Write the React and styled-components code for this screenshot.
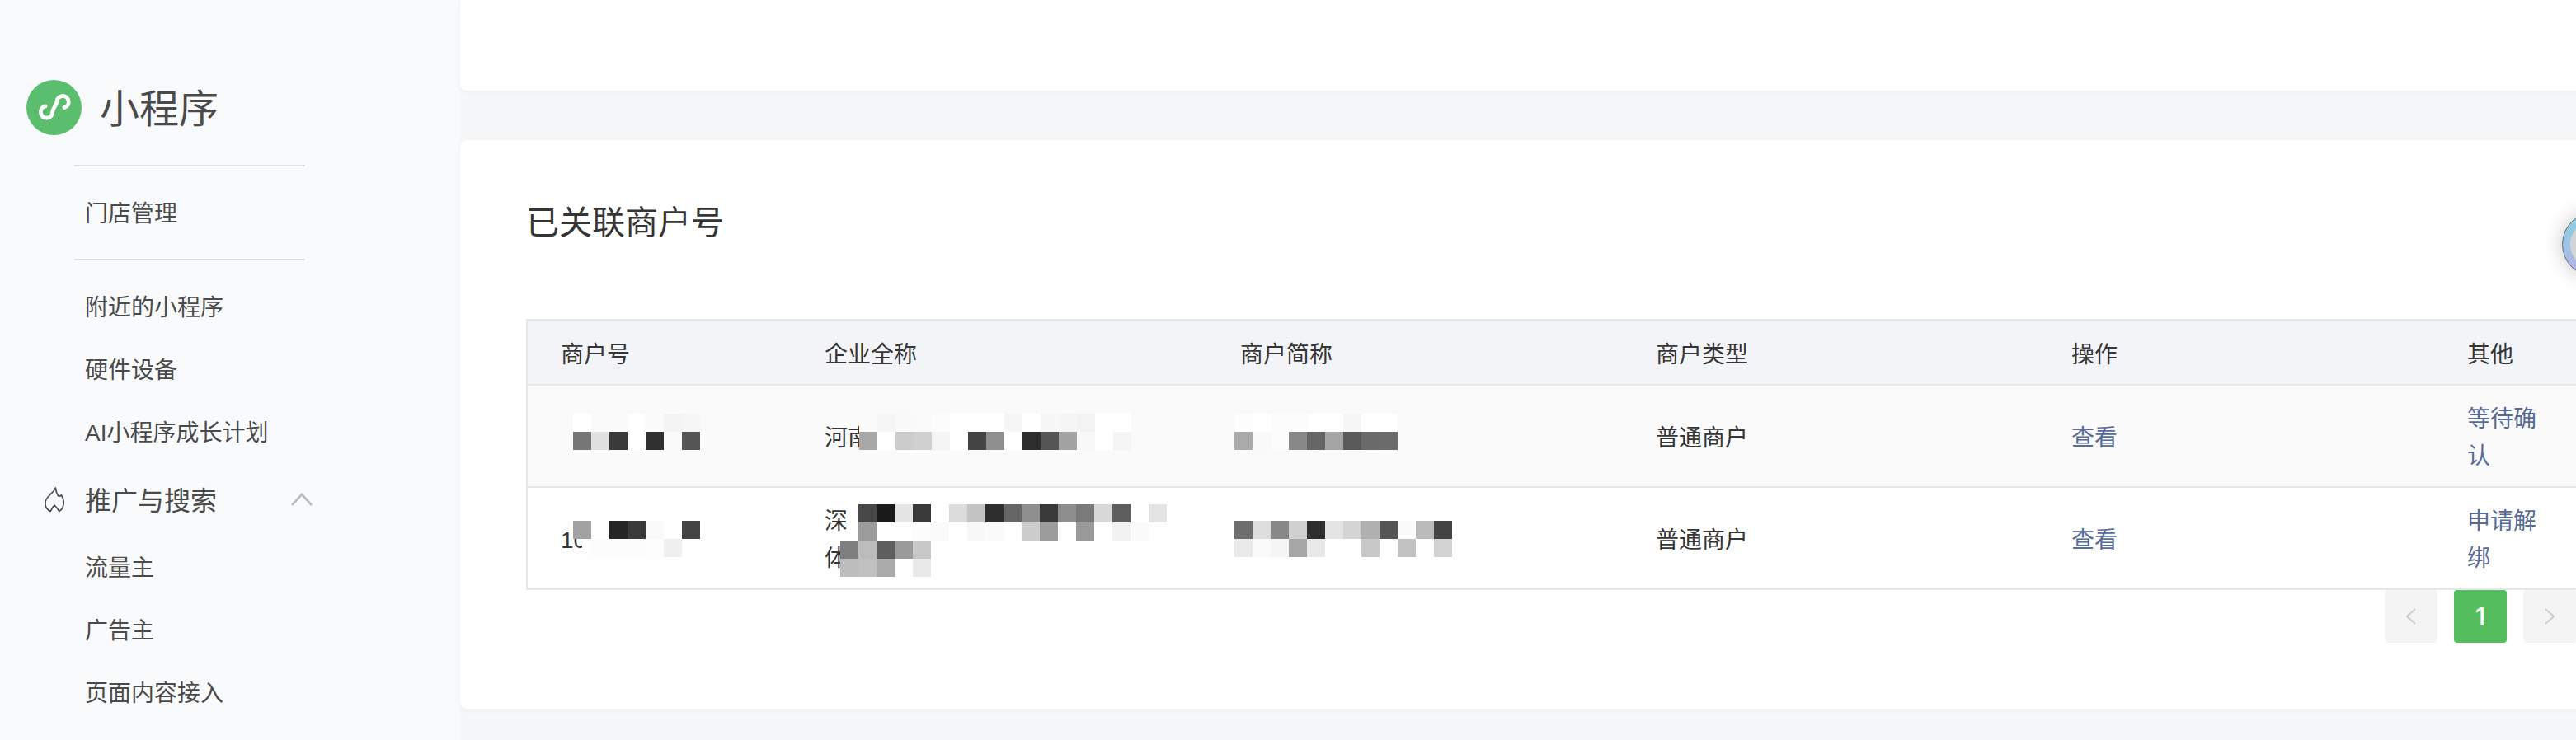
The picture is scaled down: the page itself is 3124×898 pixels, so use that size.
import React from 'react';
import styled, { createGlobalStyle } from 'styled-components';

const GlobalStyle = createGlobalStyle`
  html, body {
    margin: 0;
    padding: 0;
    width: 3124px;
    height: 898px;
    overflow: hidden;
    background: #f6f7f9;
  }
  * {
    box-sizing: border-box;
  }
`;

const Page = styled.div`
  position: relative;
  display: flex;
  width: 3124px;
  height: 898px;
  overflow: hidden;
  background: #f6f7f9;
  color: #353535;
  font-family: "Liberation Sans", "Noto Sans CJK SC", sans-serif;
  font-size: 28px;
`;

const Sidebar = styled.aside`
  flex: none;
  width: 558px;
  height: 100%;
  padding-top: 97px;
  background: #f9fafc;
  color: #4a4a4a;
`;

const Brand = styled.div`
  display: flex;
  align-items: center;
  gap: 22px;
  height: 67px;
  margin: 0 0 36px 32px;
  font-size: 48px;
`;

const BrandName = styled.span`
  padding-bottom: 5px;
`;

const Divider = styled.div`
  width: 280px;
  height: 2px;
  margin: 18px 0 18px 90px;
  background: #dfe0e3;
`;

const NavItem = styled.div`
  height: 76px;
  padding: 2px 0 0 103px;
  line-height: 76px;
`;

const NavGroup = styled.div`
  display: flex;
  align-items: center;
  height: 88px;
  padding-left: 54px;
  font-size: 32px;
`;

const GroupLabel = styled.span`
  width: 250px;
  margin-left: 25px;
  padding-bottom: 3px;
`;

const Main = styled.main`
  flex: none;
  width: 2640px;
`;

const TopCard = styled.div`
  height: 110px;
  margin-bottom: 60px;
  border-radius: 0 0 8px 8px;
  background: #fff;
  box-shadow: 0 2px 8px rgba(0, 0, 0, 0.04);
`;

const Card = styled.section`
  height: 690px;
  padding: 72px 0 0 80px;
  border-radius: 8px;
  background: #fff;
  box-shadow: 0 2px 8px rgba(0, 0, 0, 0.04);
`;

const Title = styled.h2`
  height: 60px;
  margin: -2px 0 87px 0;
  color: #353535;
  font-size: 40px;
  font-weight: 400;
  line-height: 60px;
`;

const Table = styled.table`
  width: 2495px;
  border: 2px solid #e6e7ec;
  border-collapse: collapse;
  table-layout: fixed;
`;

const Th = styled.th`
  width: ${props => props.$width}px;
  height: 79px;
  padding: 0 40px;
  border-bottom: 2px solid #e6e7ec;
  background: #f3f4f8;
  color: #353535;
  font-weight: 400;
  text-align: left;
`;

const Row = styled.tr`
  background: ${props => (props.$shaded ? '#fafafb' : '#fefefe')};
  border-bottom: 2px solid #e6e7ec;
`;

const Td = styled.td`
  position: relative;
  height: 122px;
  padding: 18px 40px 14px;
  color: ${props => (props.$link ? '#576b95' : '#353535')};
  line-height: 45px;
`;

const Mosaic = styled.div`
  position: absolute;
  left: ${props => props.$left}px;
  top: ${props => props.$top}px;
  display: flex;
  flex-direction: column;
`;

const MosaicRow = styled.div`
  display: flex;
  height: 22px;
`;

const MosaicCell = styled.span`
  flex: none;
  width: ${props => props.$width}px;
  background: ${props => props.$color};
`;

const Pagination = styled.nav`
  display: flex;
  justify-content: flex-end;
  gap: 20px;
  width: 2486px;
`;

const PageButton = styled.div`
  display: flex;
  align-items: center;
  justify-content: center;
  width: 64px;
  height: 64px;
  border-radius: 4px;
  background: ${props => (props.$active ? '#54bd5e' : '#f4f4f4')};
  color: #fff;
  font-family: "Inter", "Liberation Sans", sans-serif;
  font-size: 30px;
  font-weight: 500;
`;

const FloatBall = styled.div`
  position: absolute;
  left: 3107px;
  top: 257px;
  width: 79px;
  height: 79px;
  padding: 9px;
  border: 1px solid #666;
  border-radius: 50%;
  background: linear-gradient(180deg, #8ccde0 0%, #9cc4e4 50%, #bbb0ea 100%);
  box-shadow: 0 0 24px rgba(0, 0, 0, 0.22);
`;

const FloatInner = styled.div`
  width: 100%;
  height: 100%;
  border-radius: 50%;
  background: #d4d4d4;
`;

const Watermarks = styled.div`
  position: absolute;
  left: 23px;
  top: 39px;
  display: grid;
  grid-template-columns: repeat(8, 432px);
  grid-auto-rows: 92.4px;
  align-items: center;
  color: rgba(0, 0, 0, 0.022);
  font-family: "Liberation Sans", sans-serif;
  font-size: 28px;
  pointer-events: none;
`;

const LogoIcon = () => (
  <svg width="67" height="67" viewBox="0 0 67 67">
    <circle cx="33.5" cy="33.5" r="33.5" fill="#5abe6e" />
    <path
      d="M46 33.6A7.2 7.2 0 1 0 36.8 26.7C36.8 30 31.7 35 31.7 39A7.2 7.2 0 1 1 23 31.9"
      fill="none"
      stroke="#fff"
      strokeWidth="4.8"
      strokeLinecap="round"
    />
  </svg>
);

const FlameIcon = () => (
  <svg width="24" height="31" viewBox="0 0 24 31" fill="none" stroke="#4a4a4a" strokeWidth="1.7" strokeLinejoin="round">
    <path d="M13.3 1C13.5 4.5 15 8 16.7 11C18 11.3 19.5 10.8 20.3 9.8C22.3 12.5 23.2 15.5 23.2 18.7C23.2 23.5 21 27.5 17.8 29.5C16.5 27 14 24 12 22C10 24 8.5 27 7.3 29.5C3.5 28 0.9 24 0.9 19.5C0.9 15 4 11.8 7 9C9.5 6.8 12 4.5 13.3 1Z" />
  </svg>
);

const ChevronUp = () => (
  <svg width="26" height="16" viewBox="0 0 26 16" fill="none" stroke="#bcbcbc" strokeWidth="2.6">
    <path d="M1 15L13 2L25 15" />
  </svg>
);

const PageArrow = ({ flip }) => (
  <svg width="12" height="20" viewBox="0 0 12 20" fill="none" stroke="#cdcdcd" strokeWidth="2">
    <path d={flip ? 'M1 1L11 10L1 19' : 'M11 1L1 10L11 19'} />
  </svg>
);

// colours read off the pixelated patches; '.' lets the text below show through
const patches = {
  idShaded: [
    ['#fff', '#fbfbfb', '#fbfbfb', '#fff', '#fbfbfb', '#f4f4f4', '#f6f6f6'],
    ['#777', '#e0e0e0', '#3a3a3a', '#fff', '#303030', '#fafafa', '#555'],
  ],
  nameShaded: [
    ['#fbfbfb', '#f6f6f6', '#f9f9f9', '#fafafa', '#fcfcfc', '#fff', '#fff', '#fff', '#f6f6f6', '#fff', '#f7f7f7', '#f5f5f5', '#f3f3f3', '#fff', '#fff'],
    ['#a8a8a8', '#fff', '#ccc', '#d0d0d0', '#f5f5f5', '#fff', '#444', '#8f8f8f', '#fff', '#2e2e2e', '#555', '#a3a3a3', '#f8f8f8', '#fff', '#f5f5f5'],
  ],
  shortShaded: [
    ['#fdfdfd', '#fff', '#fcfcfc', '#fcfcfc', '#fff', '#fff', '#f6f6f6', '#fff', '#fff'],
    ['#aaa', '#f9f9f9', '#fcfcfc', '#888', '#666', '#a5a5a5', '#5a5a5a', '#6a6a6a', '#6c6c6c'],
  ],
  idPlain: [
    ['#a2a2a2', '#fff', '#252525', '#3a3a3a', '#fafafa', '#fff', '#444'],
    [['.', 11], ['#fefefe', 11], '#fcfcfc', '#fcfcfc', '#fcfcfc', '#fdfdfd', '#f0f0f0'],
  ],
  namePlain: [
    ['.', '#484848', '#1a1a1a', '#e5e5e5', '#3a3a3a', '#fff', '#dcdcdc', '#c4c4c4', '#2e2e2e', '#666', '#8f8f8f', '#3a3a3a', '#8e8e8e', '#7a7a7a', '#d8d8d8', '#5e5e5e', '#fff', '#e4e4e4'],
    ['.', '#9c9c9c', '#fff', '#fff', '#fcfcfc', '#fafafa', '#fff', '#f8f8f8', '#fbfbfb', '#fff', '#ccc', '#9c9c9c', '#fff', '#9a9a9a', '#fff', '#f2f2f2', '#fbfbfb'],
    ['#7f7f7f', '#bcbcbc', '#5e5e5e', '#9a9a9a', '#c8c8c8'],
    ['#bcbcbc', '#c0c0c0', '#aaa', '#fff', '#e8e8e8'],
  ],
  shortPlain: [
    ['#6e6e6e', '#ddd', '#888', '#d0d0d0', '#2e2e2e', '#e4e4e4', '#d4d4d4', '#b0b0b0', '#555', '#fbfbfb', '#bbb', '#444'],
    ['#eaeaea', '#fafafa', '#f5f5f5', '#a6a6a6', '#e8e8e8', '#fff', '#fff', '#c8c8c8', '#fff', '#c2c2c2', '#fff', '#d2d2d2'],
  ],
};

const Patch = ({ rows, left, top }) => (
  <Mosaic $left={left} $top={top}>
    {rows.map((cells, r) => (
      <MosaicRow key={r}>
        {cells.map((cell, c) => {
          const [color, width] = Array.isArray(cell) ? cell : [cell, 22];
          return <MosaicCell key={c} $width={width} $color={color === '.' ? 'transparent' : color} />;
        })}
      </MosaicRow>
    ))}
  </Mosaic>
);

const columns = [
  ['商户号', 321],
  ['企业全称', 504],
  ['商户简称', 504],
  ['商户类型', 504],
  ['操作', 480],
  ['其他', 182],
];

const App = () => {
  return (
    <Page>
      <GlobalStyle />
      <Sidebar>
        <Brand>
          <LogoIcon />
          <BrandName>小程序</BrandName>
        </Brand>
        <Divider />
        <NavItem>门店管理</NavItem>
        <Divider />
        <NavItem>附近的小程序</NavItem>
        <NavItem>硬件设备</NavItem>
        <NavItem>AI小程序成长计划</NavItem>
        <NavGroup>
          <FlameIcon />
          <GroupLabel>推广与搜索</GroupLabel>
          <ChevronUp />
        </NavGroup>
        <NavItem>流量主</NavItem>
        <NavItem>广告主</NavItem>
        <NavItem>页面内容接入</NavItem>
      </Sidebar>
      <Main>
        <TopCard />
        <Card>
          <Title>已关联商户号</Title>
          <Table>
            <thead>
              <tr>
                {columns.map(([label, width]) => (
                  <Th key={label} $width={width}>{label}</Th>
                ))}
              </tr>
            </thead>
            <tbody>
              <Row $shaded>
                <Td>
                  <Patch rows={patches.idShaded} left={55} top={34} />
                </Td>
                <Td>
                  河南
                  <Patch rows={patches.nameShaded} left={82} top={34} />
                </Td>
                <Td>
                  <Patch rows={patches.shortShaded} left={33} top={34} />
                </Td>
                <Td>普通商户</Td>
                <Td $link>查看</Td>
                <Td $link>等待确认</Td>
              </Row>
              <Row>
                <Td>
                  10
                  <Patch rows={patches.idPlain} left={55} top={40} />
                </Td>
                <Td>
                  深<br />体
                  <Patch rows={patches.namePlain} left={59} top={20} />
                </Td>
                <Td>
                  <Patch rows={patches.shortPlain} left={33} top={40} />
                </Td>
                <Td>普通商户</Td>
                <Td $link>查看</Td>
                <Td $link>申请解绑</Td>
              </Row>
            </tbody>
          </Table>
          <Pagination>
            <PageButton><PageArrow /></PageButton>
            <PageButton $active>1</PageButton>
            <PageButton><PageArrow flip /></PageButton>
          </Pagination>
        </Card>
      </Main>
      <FloatBall>
        <FloatInner />
      </FloatBall>
      <Watermarks>
        {Array.from({ length: 72 }, (_, i) => (
          <span key={i}>SD2d6gUS7Og</span>
        ))}
      </Watermarks>
    </Page>
  );
};

export default App;
